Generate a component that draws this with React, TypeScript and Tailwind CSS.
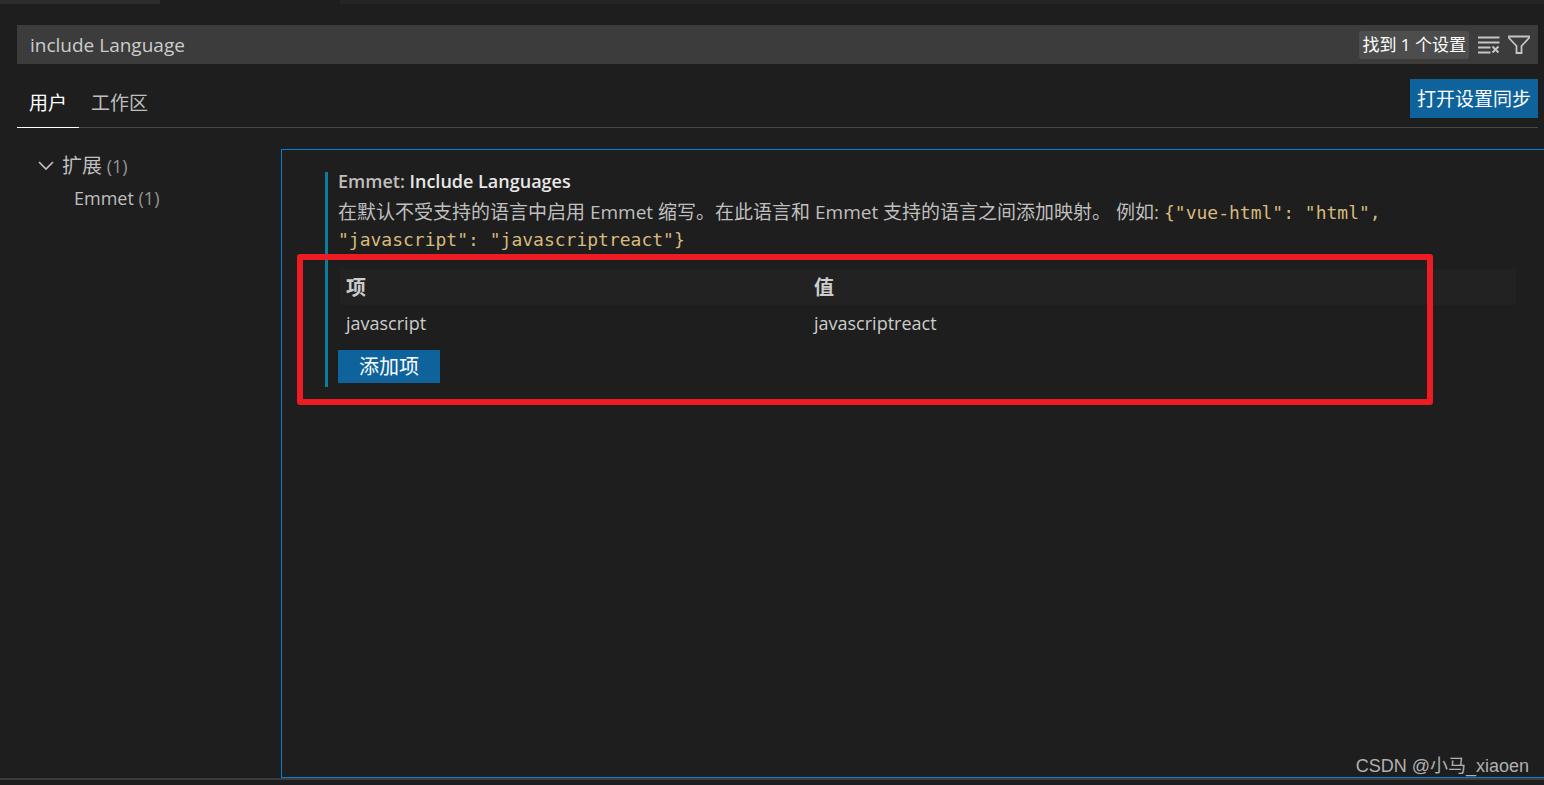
import { useState } from "react";

const sans = "font-['Open_Sans','Noto_Sans_CJK_SC',sans-serif]";

function ClearIcon() {
  return (
    <svg width="22" height="18" viewBox="0 0 22 18" fill="none" stroke="currentColor" strokeWidth="1.8" aria-hidden="true">
      <path d="M0 1.5h21.500M0 6.5h21.500M0 11.5h12.500M0 16.500h12.500" />
      <path strokeWidth="2" d="M14.500 10.500l6 6M20.500 10.500l-6 6" />
    </svg>
  );
}

function FilterIcon() {
  return (
    <svg width="22" height="19" viewBox="0 0 22 19" fill="none" stroke="currentColor" strokeWidth="1.8" aria-hidden="true">
      <path d="M1 1.500h20v1.500l-7.500 8v7h-5v-7L1 3z" />
    </svg>
  );
}

function Chevron() {
  return (
    <svg width="16" height="10" viewBox="0 0 16 10" fill="none" stroke="currentColor" strokeWidth="1.7" aria-hidden="true">
      <path d="M1 1l7 7 7-7" />
    </svg>
  );
}

const code = "font-['DejaVu_Sans_Mono',monospace] text-[18px] leading-none text-[#d7ba7d]";

export default function App() {
  const [query, setQuery] = useState("include Language");
  return (
    <div className={`relative flex min-h-screen flex-col bg-[#1e1e1e] text-[18px] leading-[27px] text-[#bfbfbf] ${sans}`}>
      <div className="flex h-1 shrink-0 bg-[#252526]">
        <div className="w-40 bg-[#2d2d2d]" />
        <div className="w-[180px] bg-[#1e1e1e]" />
      </div>

      <header className="mt-[21px] ml-[17px] mr-1.5">
        <div className="flex h-[39px] items-center bg-[#3c3c3c] pr-2 pl-[13px]">
          <input
            aria-label="搜索设置"
            value={query}
            onChange={(e) => setQuery(e.target.value)}
            className="min-w-0 flex-1 bg-transparent pt-0.5 text-[19px] text-[#cccccc] outline-none"
          />
          <span className="rounded-[3px] bg-[#4d4d4d] px-[3px] text-[17px] leading-7 text-white">找到 1 个设置</span>
          <button aria-label="清除搜索结果" className="ml-[9px] text-[#c5c5c5]"><ClearIcon /></button>
          <button aria-label="筛选设置" className="ml-2 text-[#c5c5c5]"><FilterIcon /></button>
        </div>
        <div className="mt-[15px] flex h-[49px] items-start justify-between border-b border-[#474747]">
          <nav className="flex">
            <button className="h-[49px] border-b border-white px-3 text-[19px] text-white">用户</button>
            <button className="h-[49px] px-3 text-[19px]">工作区</button>
          </nav>
          <button className="h-[39px] bg-[#0e639c] px-[7px] pt-0.5 text-[19px] text-white">打开设置同步</button>
        </div>
      </header>

      <main className="mt-[21px] flex flex-1">
        <aside className="w-[281px] shrink-0 pl-[38px]">
          <button className="flex h-[33px] items-center gap-2">
            <Chevron />
            <span><span className="text-[20px]">扩展</span> <span className="text-[#959595]">(1)</span></span>
          </button>
          <button className="ml-9 block h-[33px]">Emmet <span className="text-[#959595]">(1)</span></button>
        </aside>

        <section className="flex-1 border border-r-0 border-[#007fd4] pt-[22px] pr-7 pl-[43px]">
          <article className="relative border-l-[3px] border-[#0c7d9d] pb-1 pl-2.5">
            <h2 className="h-[19px] leading-[19px] font-semibold">
              Emmet: <span className="text-[#e7e7e7]">Include Languages</span>
            </h2>
            <p className="mt-2 max-w-[1080px] text-[19px]">
              在默认不受支持的语言中启用 Emmet 缩写。在此语言和 Emmet 支持的语言之间添加映射。 例如:{" "}
              <code className={code}>{'{"vue-html": "html",'}</code>{" "}
              <code className={code}>{'"javascript": "javascriptreact"}'}</code>
            </p>
            <div className="mt-4 ml-0.5">
              <table className="w-full table-fixed text-left text-[#cccccc]">
                <thead>
                  <tr className="h-9 bg-[#222222] text-[20px]">
                    <th className="w-[468px] pl-1.5 font-bold">项</th>
                    <th className="pl-1.5 font-bold">值</th>
                  </tr>
                </thead>
                <tbody>
                  <tr className="h-9">
                    <td className="pl-1.5">javascript</td>
                    <td className="pl-1.5">javascriptreact</td>
                  </tr>
                </tbody>
              </table>
            </div>
            <button className="mt-[9px] block h-[33px] bg-[#0e639c] px-[21px] text-[20px] text-white">添加项</button>
            <div className="pointer-events-none absolute top-[82px] right-[83px] -bottom-[18px] -left-[31px] rounded-[3px] border-6 border-[#ed1c24]" />
          </article>
        </section>
      </main>

      <footer className="h-[7px] border-t-2 border-[#3c3c3c]" />
      <div className="absolute right-[15px] bottom-[5px] font-['Liberation_Sans','Noto_Sans_CJK_SC',sans-serif] text-[18px] text-[#b0b0b0]">
        CSDN @小马_xiaoen
      </div>
    </div>
  );
}
